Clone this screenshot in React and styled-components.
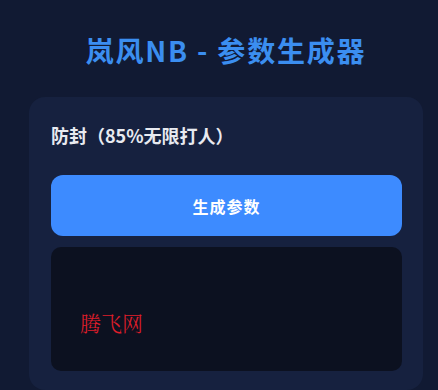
import React from "react";
import styled, { createGlobalStyle } from "styled-components";

const Global = createGlobalStyle`
  html, body { margin: 0; padding: 0; background: #111a33; }
  body { font-family: "Noto Sans CJK SC", "Noto Sans", sans-serif; }
  * { box-sizing: border-box; }
`;

const Page = styled.div`
  width: 438px;
  height: 390px;
  overflow: hidden;
  background: #111a33;
  padding-left: 29px;
`;

const Title = styled.h1`
  margin: 0;
  width: 394px;
  padding-top: 30px;
  height: 97px;
  line-height: 40px;
  text-align: center;
  font-size: 28px;
  font-weight: 700;
  letter-spacing: 1.8px;
  color: #3b8ef0;
`;

const Card = styled.div`
  width: 394px;
  background: #16213f;
  border-radius: 16px;
  padding: 22px 21px 19px 22px;
  display: flex;
  flex-direction: column;
`;

const Label = styled.div`
  line-height: 32px;
  font-size: 18px;
  font-weight: 700;
  color: #e8eaf0;
  margin-bottom: 24px;
`;

const Button = styled.button`
  height: 61px;
  border: none;
  border-radius: 12px;
  background: #3d8bff;
  color: #ffffff;
  font-family: inherit;
  font-size: 16px;
  font-weight: 700;
  letter-spacing: 1px;
  margin-bottom: 11px;
  cursor: pointer;
`;

const Output = styled.div`
  height: 124px;
  border-radius: 10px;
  background: #0c1120;
  padding: 62px 29px 0;
`;

const Watermark = styled.span`
  font-family: "Noto Serif CJK SC", "Noto Sans CJK SC", serif;
  font-weight: 300;
  font-size: 21px;
  line-height: 26px;
  color: #e01e2a;
`;

export default function App() {
  return (
    <Page>
      <Global />
      <Title>岚风NB - 参数生成器</Title>
      <Card>
        <Label>防封（85%无限打人）</Label>
        <Button>生成参数</Button>
        <Output>
          <Watermark>腾飞网</Watermark>
        </Output>
      </Card>
    </Page>
  );
}
